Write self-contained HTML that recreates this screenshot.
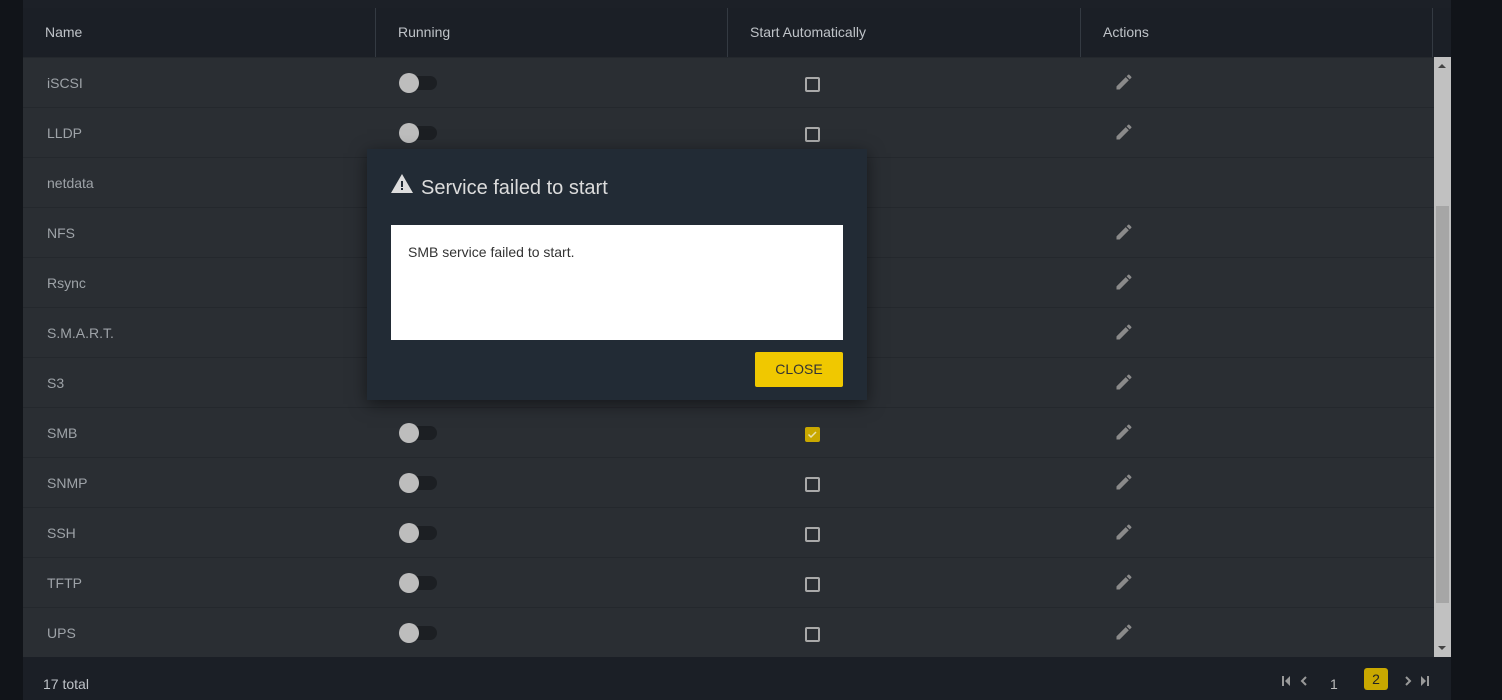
<!DOCTYPE html>
<html><head><style>
*{margin:0;padding:0;box-sizing:border-box}
body{width:1502px;height:700px;background:#111419;font-family:"Liberation Sans",sans-serif;position:relative;overflow:hidden}
.top{position:absolute;left:23px;top:0;width:1428px;height:8px;background:#1c2027}
.hdr{position:absolute;left:23px;top:8px;width:1428px;height:49px;background:#1b1f26;color:#bfc3c8;font-size:14px}
.hdr div{position:absolute;top:0;height:49px;line-height:48px;padding-left:22px;border-right:1px solid #343a42}
.row{position:absolute;left:23px;width:1411px;height:50px;background:#2a2e33;border-top:1px solid #24282d;color:#9ea3a8;font-size:14px}
.row .n{position:absolute;left:24px;top:17px}
.tg{position:absolute;left:376px;top:18px;width:38px;height:14px;border-radius:7px;background:#1c1f23}
.tg::before{content:"";position:absolute;left:0;top:-3px;width:20px;height:20px;border-radius:50%;background:#bdbdbd}
.cb{position:absolute;left:782px;top:19px;width:15px;height:15px;border:2px solid #a9a9a9;border-radius:2px}
.cb.on{background:#c9a800;border-color:#c9a800}
.pen{position:absolute;left:1091px;top:14px}
.sb{position:absolute;left:1434px;top:57px;width:17px;height:600px;background:#c1c1c1}
.th{position:absolute;left:1436px;top:206px;width:13px;height:397px;background:#a6a6a6}
.ft{position:absolute;left:23px;top:657px;width:1428px;height:43px;background:#1b1f26;color:#bfc3c8;font-size:14px}
.modal{position:absolute;left:367px;top:149px;width:500px;height:251px;background:#222b35;box-shadow:0 4px 16px rgba(0,0,0,.5)}
</style></head><body>
<div class="top"></div>
<div class="hdr">
<div style="left:0;width:353px">Name</div>
<div style="left:353px;width:352px">Running</div>
<div style="left:705px;width:353px">Start Automatically</div>
<div style="left:1058px;width:352px">Actions</div>
</div>
<svg width="0" height="0" style="position:absolute"><defs><symbol id="p" viewBox="0 0 24 24"><path fill="#8a8a8a" d="M3 17.25V21h3.75L17.81 9.94l-3.75-3.75L3 17.25zM20.71 7.04a1 1 0 000-1.41l-2.34-2.34a1 1 0 00-1.41 0l-1.83 1.83 3.75 3.75 1.83-1.83z"/></symbol></defs></svg>
<div class="row" style="top:57px"><span class="n">iSCSI</span><i class="tg"></i><i class="cb"></i><svg class="pen" width="20" height="20"><use href="#p"/></svg></div>
<div class="row" style="top:107px"><span class="n">LLDP</span><i class="tg"></i><i class="cb"></i><svg class="pen" width="20" height="20"><use href="#p"/></svg></div>
<div class="row" style="top:157px"><span class="n">netdata</span></div>
<div class="row" style="top:207px"><span class="n">NFS</span><svg class="pen" width="20" height="20"><use href="#p"/></svg></div>
<div class="row" style="top:257px"><span class="n">Rsync</span><svg class="pen" width="20" height="20"><use href="#p"/></svg></div>
<div class="row" style="top:307px"><span class="n">S.M.A.R.T.</span><svg class="pen" width="20" height="20"><use href="#p"/></svg></div>
<div class="row" style="top:357px"><span class="n">S3</span><svg class="pen" width="20" height="20"><use href="#p"/></svg></div>
<div class="row" style="top:407px"><span class="n">SMB</span><i class="tg"></i><i class="cb on"><svg width="11" height="11" viewBox="0 0 11 11" style="position:absolute;left:0;top:0"><path d="M1.5 5.5l2.5 2.5 5-5" stroke="#e8e0b0" stroke-width="1.5" fill="none"/></svg></i><svg class="pen" width="20" height="20"><use href="#p"/></svg></div>
<div class="row" style="top:457px"><span class="n">SNMP</span><i class="tg"></i><i class="cb"></i><svg class="pen" width="20" height="20"><use href="#p"/></svg></div>
<div class="row" style="top:507px"><span class="n">SSH</span><i class="tg"></i><i class="cb"></i><svg class="pen" width="20" height="20"><use href="#p"/></svg></div>
<div class="row" style="top:557px"><span class="n">TFTP</span><i class="tg"></i><i class="cb"></i><svg class="pen" width="20" height="20"><use href="#p"/></svg></div>
<div class="row" style="top:607px"><span class="n">UPS</span><i class="tg"></i><i class="cb"></i><svg class="pen" width="20" height="20"><use href="#p"/></svg></div>
<div class="sb"></div><div class="th"></div>
<svg style="position:absolute;left:1437px;top:62px" width="10" height="8"><path d="M1 6h8L5 2z" fill="#444"/></svg>
<svg style="position:absolute;left:1437px;top:644px" width="10" height="8"><path d="M1 2h8L5 6z" fill="#444"/></svg>
<div class="ft">
<span style="position:absolute;left:20px;top:19px">17 total</span>
<svg style="position:absolute;left:1258px;top:18px" width="30" height="12" viewBox="0 0 30 12"><path d="M1 1h2v10H1zM9 1L4 6l5 5z" fill="#999"/><path d="M25 2l-4 4 4 4" stroke="#999" stroke-width="2" fill="none"/></svg>
<span style="position:absolute;left:1307px;top:19px;color:#bbb">1</span>
<span style="position:absolute;left:1341px;top:11px;width:24px;height:22px;background:#c9a800;border-radius:3px;color:#222;text-align:center;line-height:22px">2</span>
<svg style="position:absolute;left:1378px;top:18px" width="30" height="12" viewBox="0 0 30 12"><path d="M5 2l4 4-4 4" stroke="#999" stroke-width="2" fill="none"/><path d="M20 1l5 5-5 5zM26 1h2v10h-2z" fill="#999"/></svg>
</div>
<div class="modal">
<svg style="position:absolute;left:24px;top:25px" width="22" height="19" viewBox="0 0 22 19"><path d="M11 0L22 19H0z" fill="#ddd"/><path d="M10 7h2v6h-2zM10 14h2v2h-2z" fill="#222b35"/></svg>
<div style="position:absolute;left:54px;top:28px;font-size:20px;color:#dcdcdc">Service failed to start</div>
<div style="position:absolute;left:24px;top:76px;width:452px;height:115px;background:#fff;color:#333;font-size:14px;padding:19px 17px">SMB service failed to start.</div>
<div style="position:absolute;left:388px;top:203px;width:88px;height:35px;background:#f0c800;border-radius:2px;color:#333;font-size:14px;text-align:center;line-height:35px">CLOSE</div>
</div>
</body></html>
